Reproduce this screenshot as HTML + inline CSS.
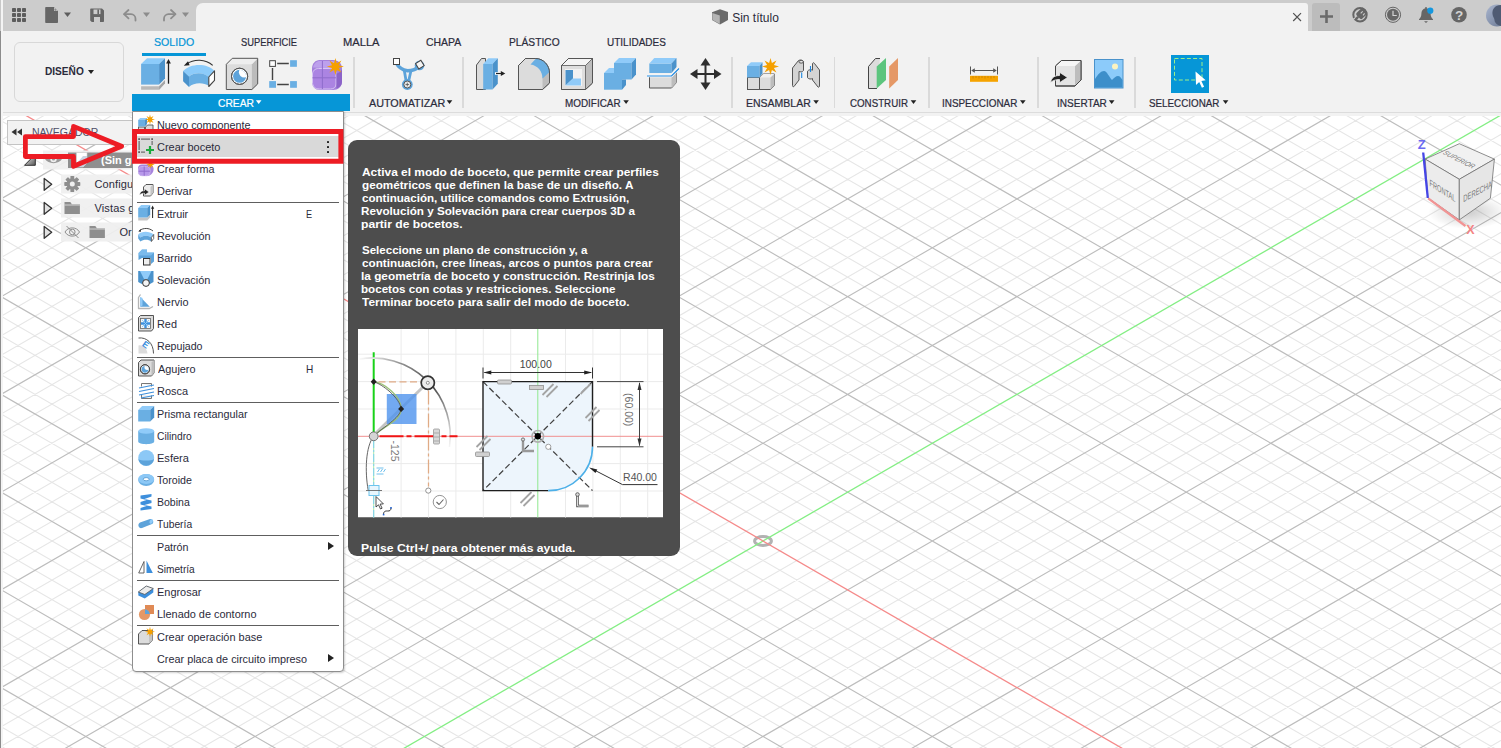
<!DOCTYPE html>
<html lang="es">
<head>
<meta charset="utf-8">
<title>Sin título</title>
<style>
*{box-sizing:border-box;margin:0;padding:0}
html,body{width:1501px;height:748px;overflow:hidden;background:#fff}
body{position:relative;font-family:"Liberation Sans",sans-serif;font-size:11px;color:#2b2b3b}
.abs{position:absolute}
#grid{position:absolute;left:0;top:0}
#leftedge{position:absolute;left:0;top:0;width:3px;height:748px;background:#f4f4f4}
#leftedge i{position:absolute;left:0;width:1px;display:block}
#titlebar{position:absolute;left:3px;top:0;width:1498px;height:31px;background:#cccccc}
#doctab{position:absolute;left:192.500px;top:2.700px;width:1112.500px;height:28.300px;background:#f2f2f2;border-radius:7px 3px 0 0}
#toolbar{position:absolute;left:3px;top:31px;width:1498px;height:82px;background:#f2f2f2}
#tbline{position:absolute;left:3px;top:112px;width:1498px;height:1px;background:#dcdcdc}
#tbband{position:absolute;left:3px;top:113px;width:1498px;height:3px;background:#f2f2f2}
.tab{position:absolute;top:36px;height:12px;line-height:12px;font-size:11px;color:#2b2b3b;white-space:nowrap}
.grp{position:absolute;top:97px;height:12px;line-height:12px;font-size:11px;color:#2b2b3b;white-space:nowrap}
.grp:after{content:"";display:inline-block;margin-left:2px;border-left:3.5px solid transparent;border-right:3.5px solid transparent;border-top:5px solid #222;vertical-align:3px}
.sep{position:absolute;top:57px;width:1.600px;height:51px;background:#dadada;margin-left:-.8px}
svg{display:block;overflow:visible}
.ico{position:absolute}
</style>
</head>
<body>
<svg id="grid" width="1501" height="748" viewBox="0 0 1501 748"><path d="M-10.0 127.2L1511.0 -750.9M-10.0 146.7L1511.0 -731.4M-10.0 166.3L1511.0 -711.9M-10.0 185.8L1511.0 -692.3M-10.0 224.9L1511.0 -653.2M-10.0 244.4L1511.0 -633.7M-10.0 264.0L1511.0 -614.1M-10.0 283.5L1511.0 -594.6M-10.0 322.6L1511.0 -555.5M-10.0 342.2L1511.0 -535.9M-10.0 739.8L1511.0 1617.9M-10.0 361.7L1511.0 -516.4M-10.0 720.3L1511.0 1598.4M-10.0 381.3L1511.0 -496.8M-10.0 700.7L1511.0 1578.8M-10.0 420.4L1511.0 -457.7M-10.0 661.6L1511.0 1539.7M-10.0 439.9L1511.0 -438.2M-10.0 642.1L1511.0 1520.2M-10.0 459.5L1511.0 -418.6M-10.0 622.5L1511.0 1500.6M-10.0 479.0L1511.0 -399.1M-10.0 603.0L1511.0 1481.1M-10.0 518.1L1511.0 -360.0M-10.0 563.9L1511.0 1442.0M-10.0 537.7L1511.0 -340.4M-10.0 544.3L1511.0 1422.4M-10.0 557.2L1511.0 -320.9M-10.0 524.8L1511.0 1402.9M-10.0 576.8L1511.0 -301.3M-10.0 505.2L1511.0 1383.3M-10.0 615.9L1511.0 -262.2M-10.0 466.1L1511.0 1344.2M-10.0 635.4L1511.0 -242.7M-10.0 446.6L1511.0 1324.7M-10.0 655.0L1511.0 -223.2M-10.0 427.0L1511.0 1305.2M-10.0 674.5L1511.0 -203.6M-10.0 407.5L1511.0 1285.6M-10.0 713.6L1511.0 -164.5M-10.0 368.4L1511.0 1246.5M-10.0 733.1L1511.0 -145.0M-10.0 348.9L1511.0 1227.0M-10.0 752.7L1511.0 -125.4M-10.0 329.3L1511.0 1207.4M-10.0 772.2L1511.0 -105.9M-10.0 309.8L1511.0 1187.9M-10.0 811.3L1511.0 -66.8M-10.0 270.7L1511.0 1148.8M-10.0 830.9L1511.0 -47.2M-10.0 251.1L1511.0 1129.2M-10.0 850.4L1511.0 -27.7M-10.0 231.6L1511.0 1109.7M-10.0 870.0L1511.0 -8.1M-10.0 212.0L1511.0 1090.1M-10.0 909.1L1511.0 31.0M-10.0 172.9L1511.0 1051.0M-10.0 928.6L1511.0 50.5M-10.0 153.4L1511.0 1031.5M-10.0 948.2L1511.0 70.1M-10.0 133.8L1511.0 1011.9M-10.0 967.7L1511.0 89.6M-10.0 114.3L1511.0 992.4M-10.0 1006.8L1511.0 128.7M-10.0 75.2L1511.0 953.3M-10.0 1026.4L1511.0 148.3M-10.0 55.6L1511.0 933.7M-10.0 1045.9L1511.0 167.8M-10.0 36.1L1511.0 914.2M-10.0 1065.5L1511.0 187.4M-10.0 16.5L1511.0 894.6M-10.0 1104.6L1511.0 226.5M-10.0 -22.6L1511.0 855.5M-10.0 1124.1L1511.0 246.0M-10.0 -42.1L1511.0 836.0M-10.0 1143.7L1511.0 265.5M-10.0 -61.7L1511.0 816.5M-10.0 1163.2L1511.0 285.1M-10.0 -81.2L1511.0 796.9M-10.0 1202.3L1511.0 324.2M-10.0 -120.3L1511.0 757.8M-10.0 1221.8L1511.0 343.7M-10.0 -139.8L1511.0 738.3M-10.0 1241.4L1511.0 363.3M-10.0 -159.4L1511.0 718.7M-10.0 1260.9L1511.0 382.8M-10.0 -178.9L1511.0 699.2M-10.0 1300.0L1511.0 421.9M-10.0 -218.0L1511.0 660.1M-10.0 1319.6L1511.0 441.5M-10.0 -237.6L1511.0 640.5M-10.0 1339.1L1511.0 461.0M-10.0 -257.1L1511.0 621.0M-10.0 1358.7L1511.0 480.6M-10.0 -276.7L1511.0 601.4M-10.0 1397.8L1511.0 519.7M-10.0 -315.8L1511.0 562.3M-10.0 1417.3L1511.0 539.2M-10.0 -335.3L1511.0 542.8M-10.0 1436.9L1511.0 558.8M-10.0 -354.9L1511.0 523.2M-10.0 1456.4L1511.0 578.3M-10.0 -374.4L1511.0 503.7M-10.0 1495.5L1511.0 617.4M-10.0 -413.5L1511.0 464.6M-10.0 1515.1L1511.0 637.0M-10.0 -433.1L1511.0 445.0M-10.0 1534.6L1511.0 656.5M-10.0 -452.6L1511.0 425.5M-10.0 1554.2L1511.0 676.1M-10.0 -472.2L1511.0 405.9M-10.0 1593.3L1511.0 715.2M-10.0 -511.3L1511.0 366.8M-10.0 1612.8L1511.0 734.7M-10.0 -530.8L1511.0 347.3M-10.0 1632.4L1511.0 754.2M-10.0 -550.4L1511.0 327.8M-10.0 -569.9L1511.0 308.2M-10.0 -609.0L1511.0 269.1M-10.0 -628.5L1511.0 249.6M-10.0 -648.1L1511.0 230.0M-10.0 -667.6L1511.0 210.5M-10.0 -706.7L1511.0 171.4M-10.0 -726.3L1511.0 151.8M-10.0 -745.8L1511.0 132.3M-10.0 -765.4L1511.0 112.7" stroke="#e6e6e6" stroke-width="1.1" fill="none"/><path d="M-10.0 107.6L1511.0 -770.5M-10.0 205.3L1511.0 -672.8M-10.0 303.1L1511.0 -575.0M-10.0 400.8L1511.0 -477.3M-10.0 681.2L1511.0 1559.3M-10.0 498.6L1511.0 -379.5M-10.0 583.4L1511.0 1461.5M-10.0 596.3L1511.0 -281.8M-10.0 485.7L1511.0 1363.8M-10.0 694.0L1511.0 -184.1M-10.0 388.0L1511.0 1266.1M-10.0 791.8L1511.0 -86.3M-10.0 290.2L1511.0 1168.3M-10.0 889.5L1511.0 11.4M-10.0 192.5L1511.0 1070.6M-10.0 1085.0L1511.0 206.9M-10.0 -3.0L1511.0 875.1M-10.0 1182.7L1511.0 304.6M-10.0 -100.7L1511.0 777.4M-10.0 1280.5L1511.0 402.4M-10.0 -198.5L1511.0 679.6M-10.0 1378.2L1511.0 500.1M-10.0 -296.2L1511.0 581.9M-10.0 1476.0L1511.0 597.9M-10.0 -394.0L1511.0 484.1M-10.0 1573.7L1511.0 695.6M-10.0 -491.7L1511.0 386.4M-10.0 -589.4L1511.0 288.7M-10.0 -687.2L1511.0 190.9" stroke="#bdbdbd" stroke-width="1.15" fill="none"/><ellipse cx="763.0" cy="541.0" rx="8.400" ry="4.400" fill="none" stroke="#b2b2b2" stroke-width="3"/><path d="M-10.0 987.3L1511.0 109.2" stroke="#84ee84" stroke-width="1.3" fill="none"/><path d="M-10.0 94.7L1511.0 972.8" stroke="#f58a8a" stroke-width="1.3" fill="none"/></svg>
<div id="leftedge"><i style="top:0;height:31px;background:#c8c8c8"></i><i style="top:31px;height:717px;background:#8c8c8c"></i></div>
<div id="titlebar">
<div id="doctab"></div>
<div class="abs" style="left:1309px;top:3px;width:28px;height:28px;background:#bcbcbc;border-radius:3px 3px 0 0"></div>
</div>
<svg class="abs" style="left:0;top:0" width="1501" height="31" viewBox="0 0 1501 31">
<!-- app grid -->
<g fill="#5c5c5c">
<rect x="12" y="8" width="4" height="4" rx=".8"/><rect x="17" y="8" width="4" height="4" rx=".8"/><rect x="22" y="8" width="4" height="4" rx=".8"/>
<rect x="12" y="13" width="4" height="4" rx=".8"/><rect x="17" y="13" width="4" height="4" rx=".8"/><rect x="22" y="13" width="4" height="4" rx=".8"/>
<rect x="12" y="18" width="4" height="4" rx=".8"/><rect x="17" y="18" width="4" height="4" rx=".8"/><rect x="22" y="18" width="4" height="4" rx=".8"/>
</g>
<!-- file -->
<path d="M46 7h8l4 4v11.2a.8.800 0 0 1-.8.800h-11.200a.8.800 0 0 1-.8-.8v-14.400a.8.800 0 0 1 .8-.8z" fill="#666"/>
<path d="M54 7v4h4z" fill="#ccc"/><path d="M54.600 8.400v2h2z" fill="#666"/>
<path d="M64 12.500h7l-3.500 4.500z" fill="#5c5c5c"/>
<!-- save -->
<path d="M91 8.500h11l2 2v10.700a.8.800 0 0 1-.8.800h-11.400l-1.600-1.600v-11.100a.8.800 0 0 1 .8-.8z" fill="#666"/>
<rect x="93.500" y="9.500" width="7" height="4.600" fill="#ccc"/><rect x="97.400" y="9.500" width="1.600" height="4.600" fill="#666"/>
<rect x="94" y="17" width="6" height="5" fill="#ccc"/>
<!-- undo -->
<g fill="none" stroke="#8c8c8c" stroke-width="1.800" stroke-linecap="round" stroke-linejoin="round">
<path d="M128.500 10l-4.500 4.200l4.500 4.200"/><path d="M124.500 14.200h6.500a4.500 4.500 0 0 1 4.500 4.500v1.800"/>
<path d="M171 10l4.500 4.200l-4.500 4.200"/><path d="M175 14.200h-6.500a4.500 4.500 0 0 0-4.500 4.500v1.800"/>
</g>
<path d="M143 12.500h7l-3.500 4.500z" fill="#8c8c8c"/>
<path d="M182 12.500h7l-3.500 4.500z" fill="#8c8c8c"/>
<!-- doc cube -->
<path d="M712 12.300l8-3l8 2.700v8l-8 4.500l-8-4.500z" fill="#6a6a6a"/>
<path d="M712.300 12.900l7.500 2.500v8.600l-7.500-4.300z" fill="#b4b4b4"/>
<!-- close x -->
<path d="M1293.200 13.200l7.800 7.800M1301 13.200l-7.800 7.800" stroke="#505050" stroke-width="1.200" fill="none"/>
<!-- plus -->
<path d="M1320 16.500h13M1326.500 10v13" stroke="#6a6a6a" stroke-width="2.600" fill="none"/>
<!-- extensions -->
<circle cx="1360" cy="14.800" r="6.700" fill="none" stroke="#666" stroke-width="2"/>
<path d="M1351.800 20.300l3.600-2.600" stroke="#ccc" stroke-width="1.300" fill="none"/>
<clipPath id="plc"><circle cx="1360" cy="14.800" r="7.600"/></clipPath><g clip-path="url(#plc)"><rect x="1356.600" y="8.700" width="12" height="8" rx="1.800" fill="#666" transform="rotate(-45 1362.600 12.700)"/></g>
<path d="M1358.200 16.800l-2.400 2.600" stroke="#666" stroke-width="2.400" fill="none"/>
<path d="M1360.700 13.300l2-2M1363 15.300l1.600-2" stroke="#ccc" stroke-width="1.100" fill="none"/>
<!-- clock -->
<circle cx="1393" cy="14.800" r="7.600" fill="none" stroke="#666" stroke-width="1"/>
<circle cx="1393" cy="14.800" r="6" fill="#666"/>
<path d="M1393 10.700v4.800h3.800" stroke="#d4d4d4" stroke-width="1.200" fill="none"/>
<!-- bell -->
<path d="M1425.300 7h1.400v1.200c2.600.6 3.900 2.800 3.900 5.300c0 3 1 4.500 2.400 5.700v.8h-14v-.8c1.400-1.200 2.400-2.700 2.400-5.700c0-2.500 1.300-4.700 3.900-5.300z" fill="#666"/>
<path d="M1424 21.200h4l-2 1.800z" fill="#666"/>
<circle cx="1430.300" cy="10.700" r="3.100" fill="#1597de"/>
<!-- help -->
<circle cx="1459" cy="14.800" r="7.800" fill="#666"/>
<text x="1459" y="19.800" font-family="Liberation Sans, sans-serif" font-weight="bold" font-size="13.500" text-anchor="middle" fill="#d4d4d4">?</text>
<!-- avatar -->
<defs><linearGradient id="av" x1="0" y1="0" x2="1" y2="1"><stop offset="0" stop-color="#aab6cf"/><stop offset="1" stop-color="#66748f"/></linearGradient></defs>
<circle cx="1497" cy="15.500" r="11" fill="url(#av)"/>
<path d="M1501 5c-6 0-9 4-8.500 9c.3 3 2 4 2 6c0 2 2 5 6.500 6z" fill="#4f5b73"/>
</svg>
<div class="abs" style="left:732.200px;top:11px;font-size:12px;line-height:15px;color:#2b2b3b;white-space:nowrap">Sin título</div>
<div id="toolbar"></div>
<div id="tbline"></div><div id="tbband"></div>
<div class="abs" style="left:14px;top:42px;width:110px;height:60px;border:1px solid #d8d8d8;border-radius:6px;background:#f2f2f2"></div>
<span style="position:absolute;left:44.643px;top:64.5px;height:13px;line-height:13px;font-size:11px;font-weight:bold;color:#2b2b3b;white-space:nowrap;transform-origin:0 50%;transform:scaleX(0.9188);">DISEÑO</span>
<div class="abs" style="left:88px;top:69.500px;border-left:3.500px solid transparent;border-right:3.500px solid transparent;border-top:4px solid #222"></div>
<span style="position:absolute;left:153.521px;top:35.5px;height:13px;line-height:13px;font-size:10.5px;font-weight:normal;color:#0696d7;white-space:nowrap;transform-origin:0 50%;transform:scaleX(1.0131);-webkit-text-stroke:.2px currentColor">SOLIDO</span>
<div class="abs" style="left:141.500px;top:52.700px;width:64px;height:2.900px;background:#0696d7"></div>
<span style="position:absolute;left:240.779px;top:35.5px;height:13px;line-height:13px;font-size:10.5px;font-weight:normal;color:#2b2b3b;white-space:nowrap;transform-origin:0 50%;transform:scaleX(0.8904);-webkit-text-stroke:.2px currentColor">SUPERFICIE</span>
<span style="position:absolute;left:343.209px;top:35.5px;height:13px;line-height:13px;font-size:10.5px;font-weight:normal;color:#2b2b3b;white-space:nowrap;transform-origin:0 50%;transform:scaleX(1.0612);-webkit-text-stroke:.2px currentColor">MALLA</span>
<span style="position:absolute;left:426.477px;top:35.5px;height:13px;line-height:13px;font-size:10.5px;font-weight:normal;color:#2b2b3b;white-space:nowrap;transform-origin:0 50%;transform:scaleX(0.9954);-webkit-text-stroke:.2px currentColor">CHAPA</span>
<span style="position:absolute;left:509.182px;top:35.5px;height:13px;line-height:13px;font-size:10.5px;font-weight:normal;color:#2b2b3b;white-space:nowrap;transform-origin:0 50%;transform:scaleX(0.9741);-webkit-text-stroke:.2px currentColor">PLÁSTICO</span>
<span style="position:absolute;left:607.451px;top:35.5px;height:13px;line-height:13px;font-size:10.5px;font-weight:normal;color:#2b2b3b;white-space:nowrap;transform-origin:0 50%;transform:scaleX(0.9516);-webkit-text-stroke:.2px currentColor">UTILIDADES</span>
<div class="abs" style="left:132px;top:94px;width:218px;height:17px;background:#0696d7"></div>
<span style="position:absolute;left:217.687px;top:96.5px;height:13px;line-height:13px;font-size:10.5px;font-weight:normal;color:#ffffff;white-space:nowrap;transform-origin:0 50%;transform:scaleX(0.9775);-webkit-text-stroke:.2px currentColor">CREAR</span>
<span style="position:absolute;left:369px;top:96.5px;height:13px;line-height:13px;font-size:10.5px;font-weight:normal;color:#2b2b3b;white-space:nowrap;transform-origin:0 50%;transform:scaleX(1.0255);-webkit-text-stroke:.2px currentColor">AUTOMATIZAR</span>
<span style="position:absolute;left:564.807px;top:96.5px;height:13px;line-height:13px;font-size:10.5px;font-weight:normal;color:#2b2b3b;white-space:nowrap;transform-origin:0 50%;transform:scaleX(0.9437);-webkit-text-stroke:.2px currentColor">MODIFICAR</span>
<span style="position:absolute;left:745.66px;top:96.5px;height:13px;line-height:13px;font-size:10.5px;font-weight:normal;color:#2b2b3b;white-space:nowrap;transform-origin:0 50%;transform:scaleX(1.0004);-webkit-text-stroke:.2px currentColor">ENSAMBLAR</span>
<span style="position:absolute;left:849.513px;top:96.5px;height:13px;line-height:13px;font-size:10.5px;font-weight:normal;color:#2b2b3b;white-space:nowrap;transform-origin:0 50%;transform:scaleX(0.9280);-webkit-text-stroke:.2px currentColor">CONSTRUIR</span>
<span style="position:absolute;left:942.11px;top:96.5px;height:13px;line-height:13px;font-size:10.5px;font-weight:normal;color:#2b2b3b;white-space:nowrap;transform-origin:0 50%;transform:scaleX(0.9422);-webkit-text-stroke:.2px currentColor">INSPECCIONAR</span>
<span style="position:absolute;left:1056.6px;top:96.5px;height:13px;line-height:13px;font-size:10.5px;font-weight:normal;color:#2b2b3b;white-space:nowrap;transform-origin:0 50%;transform:scaleX(0.9563);-webkit-text-stroke:.2px currentColor">INSERTAR</span>
<span style="position:absolute;left:1149.06px;top:96.5px;height:13px;line-height:13px;font-size:10.5px;font-weight:normal;color:#2b2b3b;white-space:nowrap;transform-origin:0 50%;transform:scaleX(0.9349);-webkit-text-stroke:.2px currentColor">SELECCIONAR</span>
<svg class="abs" style="left:0;top:0" width="1501" height="116" viewBox="0 0 1501 116">
<g fill="#222"><path d="M446.7 100.300h5.600l-2.800 3.700z"/><path d="M623.3 100.300h5.600l-2.800 3.700z"/><path d="M813.3 100.300h5.600l-2.800 3.700z"/><path d="M910.7 100.300h5.600l-2.800 3.700z"/><path d="M1020 100.300h5.600l-2.800 3.700z"/><path d="M1108.9 100.300h5.600l-2.800 3.700z"/><path d="M1222.8 100.300h5.600l-2.800 3.700z"/></g>
<path d="M255.9 100.300h5.600l-2.800 3.700z" fill="#fff"/>
</svg>
<div class="sep" style="left:354px"></div>
<div class="sep" style="left:463px"></div>
<div class="sep" style="left:732px"></div>
<div class="sep" style="left:834.700px"></div>
<div class="sep" style="left:928.800px"></div>
<div class="sep" style="left:1038px"></div>
<div class="sep" style="left:1135px"></div>
<svg class="abs" style="left:0;top:0" width="1501" height="116" viewBox="0 0 1501 116">
<defs>
<path id="star8" d="M0-8.500L1.400-3.400L6-6L3.400-1.400L8.500 0L3.400 1.400L6 6L1.400 3.400L0 8.500L-1.400 3.400L-6 6L-3.400 1.400L-8.500 0L-3.400-1.400L-6-6L-1.400-3.400Z"/>
</defs>
<!-- 1 extrude -->
<g>
<path d="M141.100 86.200h18l5.900-6v3l-5.900 6.600h-18z" fill="#b9b9b9"/>
<path d="M159.100 86.200l5.900-6v3l-5.900 6.600z" fill="#a6a6a6"/>
<rect x="141.100" y="63.900" width="18" height="20.700" fill="#6aafe3"/>
<path d="M141.100 63.900l5.900-5.700h18l-5.900 5.700z" fill="#8ccbfa"/>
<path d="M159.100 63.900l5.900-5.700v20.400l-5.900 6z" fill="#4a92cb"/>
<path d="M168.500 83.700v-21" stroke="#222" stroke-width="1.300" fill="none"/>
<path d="M166.100 63.400l2.400-4.500l2.400 4.500z" fill="#222"/>
</g>
<!-- 2 revolve -->
<g>
<path d="M183.100 71.100c7-8 24-8.300 31.400-.3l-5.700 6.200c-5-5-15-5-19.800-.5z" fill="#8ccbfa"/>
<path d="M189 76.500c5-4.500 15-4.500 19.800.5v9c-5-3.800-15-3.700-19.800.9z" fill="#6aafe3"/>
<path d="M183.100 71.100l5.900 5.400v10.400l-5.900-5.600z" fill="#4a92cb"/>
<path d="M208.800 77l5.700-6.200v9.600l-5.700 6.100z" fill="#fff" stroke="#444" stroke-width="1.100" stroke-linejoin="round"/>
<path d="M186.500 64c7.500-5.300 19-5.300 26.200 1.400" fill="none" stroke="#333" stroke-width="1.100"/>
<path d="M183.800 65.700l4.200-4.400l1.600 4z" fill="#222"/>
</g>
<!-- 3 hole -->
<g>
<path d="M226.300 64.300l6-6h25.400v25.600l-5.800 5.600h-25.600z" fill="#dcdcdc"/>
<path d="M251.900 64.300l5.800-6v25.600l-5.800 5.600z" fill="#bcbcbc"/>
<path d="M226.300 64.300l6-6h25.400l-5.800 6z" fill="#eeeeee"/>
<path d="M226.300 64.300l6-6h25.400v25.600l-5.800 5.600h-25.600z" fill="none" stroke="#555" stroke-width="1" stroke-linejoin="round"/>
<circle cx="239.600" cy="76.300" r="8.100" fill="#fff" stroke="#555" stroke-width="1"/>
<clipPath id="hc1"><circle cx="239.600" cy="76.300" r="6.500"/></clipPath>
<g clip-path="url(#hc1)"><rect x="230" y="66" width="20" height="20" fill="#5da3da"/><circle cx="244.200" cy="72.200" r="5.300" fill="#fff"/></g>
<circle cx="239.600" cy="76.300" r="8.100" fill="none" stroke="#555" stroke-width="1"/>
</g>
<!-- 4 pattern -->
<g>
<path d="M272.500 68v12M277.200 63.500h11.600M277.200 84.500h11.600" stroke="#444" stroke-width="1.400" fill="none"/>
<rect x="269.700" y="60.700" width="5.700" height="5.700" fill="#fff" stroke="#444" stroke-width="1"/>
<rect x="290.100" y="60.200" width="6.800" height="6.600" fill="#6aafe3"/>
<rect x="269.200" y="81.100" width="6.800" height="6.700" fill="#6aafe3"/>
<rect x="290.100" y="81.100" width="6.800" height="6.700" fill="#6aafe3"/>
</g>
<!-- 5 form -->
<g>
<path d="M319.500 60h13.500c5 0 9 3.500 9 8.500v13c0 5-4 8.500-9 8.500h-13c-5 0-8-3.500-8-8.500v-13c0-5 3.500-8.500 7.500-8.500z" fill="#a581dc"/>
<path d="M313 67.500c1-4 3.500-6.500 7-6.500h12c3 0 5 1 6 3l-2 4.500z" fill="#bda0ec"/>
<path d="M318.500 68.500h12c3.500 0 5.500 2 5.500 5v10.500c0 3-2 5-5.500 5h-11c-4.500 0-7-2.500-7-7v-8c0-3 2.500-5.500 6-5.500z" fill="#ab84e2" stroke="#d6c4f3" stroke-width="1"/>
<path d="M336.500 73.500c2.500-.5 4.500-2 5.500-4v12.500c0 3-2 5.500-5.500 6.500z" fill="#8c64c8"/>
<path d="M322.400 61v28M312.500 77.800h23.500" stroke="#8f6dcc" stroke-width="1" fill="none"/>
<use href="#star8" transform="translate(335.400 66.600)" fill="#f5a000"/>
</g>
<!-- 6 automate -->
<g>
<path d="M396 62.500q3.500 7 11.500 8.300M419.500 66q-4.500 4.800-12 4.800" fill="none" stroke="#5da3da" stroke-width="3.600" stroke-linecap="round"/>
<path d="M404.300 70.500l1.800 10.500M411 70.500l-2.300 10.500" fill="none" stroke="#5da3da" stroke-width="2.800"/>
<circle cx="419.500" cy="65.500" r="4.800" fill="#5da3da"/>
<circle cx="407.300" cy="84.500" r="5.400" fill="#5da3da"/>
<rect x="393.500" y="58.500" width="6" height="6" fill="#fff" stroke="#444" stroke-width="1"/>
<rect x="416.700" y="61.500" width="6.300" height="6.300" fill="#f4f4f4" stroke="#444" stroke-width="1" transform="rotate(-32 419.850 64.650)"/>
<circle cx="407.300" cy="84.500" r="3.500" fill="#e8e8e8" stroke="#555" stroke-width="1"/>
<path d="M405.500 84.500h3.600M407.300 82.700v3.600" stroke="#555" stroke-width=".8"/>
</g>
<!-- 7 press pull -->
<g>
<path d="M476.500 65l5-6.500h4v31h-9z" fill="#dcdcdc" stroke="#555" stroke-width="1" stroke-linejoin="round"/>
<rect x="483.200" y="64" width="9.300" height="25.500" fill="#6aafe3"/>
<path d="M483.200 64l5-5.800h9.600l-5.300 5.800z" fill="#90cbf9"/>
<path d="M492.500 64l5.300-5.800v25.500l-5.300 5.800z" fill="#4a92cb"/>
<path d="M495 73.500h7" stroke="#fff" stroke-width="2.600"/>
<path d="M496 73.500h6" stroke="#222" stroke-width="1.200"/>
<path d="M500.800 71l4.500 2.500l-4.500 2.500z" fill="#222"/>
</g>
<!-- 8 fillet -->
<g>
<path d="M518.500 65.500l7-7h10c8 0 14 7 14 14.500v10l-7 6.500h-24z" fill="#dcdcdc" stroke="#555" stroke-width="1" stroke-linejoin="round"/>
<path d="M542.500 76.500l7-6.500v13l-7 6.500z" fill="#bdbdbd"/>
<path d="M530.500 64.500l5.500-6c8 0 13.500 6.500 13.500 13.500l-7 6.500c0-7-4.500-13-12-14z" fill="#6aafe3"/>
<path d="M518.500 65.500l7-7h10c8 0 14 7 14 14.500v10l-7 6.500h-24z" fill="none" stroke="#555" stroke-width="1" stroke-linejoin="round"/>
</g>
<!-- 9 shell -->
<g>
<path d="M561.500 65.500l7-7h24v24.500l-7 6.500h-24z" fill="#f4f4f4" stroke="#555" stroke-width="1" stroke-linejoin="round"/>
<path d="M585.500 65.500l7-7v24.500l-7 6.500z" fill="#bdbdbd"/>
<rect x="561.500" y="65.500" width="24" height="24" fill="#dedede"/>
<rect x="565" y="69" width="17" height="17" fill="#f2f2f2"/>
<path d="M565.500 70h7.500v8.500l-7.500 7z" fill="#4a92cb"/>
<path d="M573 78.500h8v7h-15.500z" fill="#90cbf9"/>
<path d="M561.500 65.500l7-7h24v24.500l-7 6.500h-24z" fill="none" stroke="#555" stroke-width="1" stroke-linejoin="round"/>
<path d="M561.500 65.500h24v24M585.500 65.500l7-7" fill="none" stroke="#555" stroke-width=".8"/>
</g>
<!-- 10 combine -->
<g>
<rect x="614" y="63" width="17.500" height="16.500" fill="#6aafe3"/>
<path d="M614 63l5-5h17l-4.500 5z" fill="#90cbf9"/>
<path d="M631.500 63l4.500-5v16.500l-4.500 5z" fill="#4a92cb"/>
<path d="M622 79.500h4v5.500l-4 4.700z" fill="#4a92cb"/>
<rect x="604" y="73" width="18" height="16.700" fill="#6aafe3"/>
<path d="M604 73l5-5h5v5z" fill="#90cbf9"/>
</g>
<!-- 11 split body -->
<g>
<path d="M649.500 76.500h22l5-5v11l-5 5.500h-22z" fill="#dcdcdc" stroke="#555" stroke-width="1" stroke-linejoin="round"/>
<path d="M671.500 76.500l5-5v11l-5 5.500z" fill="#bdbdbd"/>
<rect x="649.300" y="63.500" width="22.200" height="9.500" fill="#6aafe3"/>
<path d="M649.300 63.500l5-5.500h22.200l-5 5.500z" fill="#90cbf9"/>
<path d="M671.500 63.500l5-5.500v9l-5 6z" fill="#4a92cb"/>
<path d="M647 76h24.500l7.500-7.500" fill="none" stroke="#fff" stroke-width="2.400"/>
<path d="M647 76h24.500l7.500-7.500" fill="none" stroke="#1e88e0" stroke-width="1.200"/>
</g>
<!-- 12 move -->
<g fill="#2e2e2e">
<path d="M704.500 64h2v20h-2z"/><path d="M695.500 73h20v2h-20z"/>
<path d="M705.500 58l5 7.500h-10z"/><path d="M705.500 90l5-7.500h-10z"/>
<path d="M690 74l7.500-5v10z"/><path d="M721.500 74l-7.500-5v10z"/>
</g>
<!-- 13 new component -->
<g>
<rect x="747.500" y="77.500" width="12" height="12" fill="#dcdcdc" stroke="#555" stroke-width="1"/>
<path d="M759.500 77.500l4-3.500h11v11.500l-4 4h-11z" fill="#dcdcdc" stroke="#555" stroke-width="1" stroke-linejoin="round"/>
<path d="M759.500 77.500l4-3.500h11l-4 3.500z" fill="#f0f0f0"/>
<path d="M770.500 77.500l4-3.500v11.500l-4 4z" fill="#bdbdbd"/>
<rect x="747" y="66" width="12.500" height="11.500" fill="#6aafe3"/>
<path d="M747 66l4-3.800h11.500l-3 3.800z" fill="#90cbf9"/>
<path d="M759.500 66l3-3.800v11l-3 4.300z" fill="#4a92cb"/>
<use href="#star8" transform="translate(770.500 66.500)" fill="#f5a000"/>
</g>
<!-- 14 joint -->
<g stroke="#555" stroke-width="1" stroke-linejoin="round">
<path d="M792.500 68l6-7.500c2-1 4-.5 5 1v9c-1 1.500-3 1.500-4.500 1v8.500l-5 6.500c-1 .5-1.500 0-1.500-1z" fill="#d4d4d4"/>
<ellipse cx="801.200" cy="61.800" rx="2.300" ry="1.300" fill="#f0f0f0"/>
<path d="M812.500 63.500c.5-1 1.500-1 2 0l5 6.500v16c0 1-.8 1.500-1.500 1l-5.500-7v-1.500c-1.500 1-4 .5-5-.8v-6.500c1-1.500 3.500-2 5-1z" fill="#d4d4d4"/>
</g>
<path d="M801.700 72.500v5.500M810.500 66v6" stroke="#1e88e0" stroke-width="1.100" fill="none"/>
<!-- 15 construct -->
<g>
<path d="M877 88.500h-8.500v-22l7-8h4.500" fill="#dcdcdc" stroke="#444" stroke-width="1" stroke-linejoin="round"/>
<path d="M876.700 66.500l9.300-8.500v22l-9.300 8.500z" fill="#5cc57e"/>
<path d="M889.200 66.500l8.800-8.500v22l-8.800 8.500z" fill="#e59866"/>
</g>
<!-- 16 measure -->
<g>
<path d="M970.500 66.500v8M997.500 66.500v8M972 70.500h24" stroke="#555" stroke-width="1" fill="none"/>
<path d="M971.200 70.500l3.600-2.200v4.400zM996.800 70.500l-3.600-2.200v4.400z" fill="#555"/>
<rect x="970" y="75.800" width="28" height="6" fill="#f5a300"/>
<path d="M973 76v2.500M976 76v2M979 76v2.500M982 76v2M985 76v2.500M988 76v2M991 76v2.500M994 76v2" stroke="#c47d00" stroke-width=".7"/>
</g>
<!-- 17 insert derive -->
<g>
<path d="M1055.500 66l6-5.500h19.500v19.500l-6 6h-19.500z" fill="#e4e4e4" stroke="#444" stroke-width="1" stroke-linejoin="round"/>
<path d="M1075 66l6-5.500v19.500l-6 6z" fill="#bdbdbd"/>
<path d="M1055.500 66l6-5.500h19.500l-6 5.500z" fill="#f6f6f6"/>
<path d="M1055.500 66l6-5.500h19.500v19.500l-6 6h-19.500z" fill="none" stroke="#444" stroke-width="1" stroke-linejoin="round"/>
<path d="M1050.500 82.500c1-5 4-7 9-7v-3.200l8 5.200l-8 5.200v-3.200c-4 0-6.500 1-9 3z" fill="#222" stroke="#f2f2f2" stroke-width=".8"/>
</g>
<!-- 18 image -->
<g>
<rect x="1094.500" y="59.500" width="28.500" height="28.500" fill="#8ccbfa" stroke="#4a92cb" stroke-width="1"/>
<path d="M1095 79c3-5 6-8 9-8s5 6 8 9c2-2 4-4 6-4s3 2 4.500 4v7.500h-27.500z" fill="#3d8fca"/>
<circle cx="1115" cy="66.500" r="3" fill="#fbf3c0"/>
</g>
<!-- 19 select -->
<g>
<rect x="1171" y="55" width="38" height="38" fill="#0696d7"/>
<rect x="1174.500" y="58.500" width="27.500" height="21.500" fill="none" stroke="#9df08a" stroke-width="1" stroke-dasharray="4 2.200"/>
<path d="M1195.500 71.500l10.200 8.800l-4.300.8l2.700 5.600l-2.200 1l-2.700-5.600l-3.200 2.900z" fill="#fff"/>
</g>
</svg>
<div class="abs" style="left:7px;top:120px;width:200px;height:25px;background:#f2f2f2;border:1px solid #c4c4c4"></div>
<svg class="abs" style="left:0;top:116px" width="140" height="140" viewBox="0 116 140 140">
<path d="M16.500 128.500v7l-5-3.500zM22 128.500v7l-5-3.500z" fill="#333"/>
<!-- row backgrounds -->
<rect x="43" y="150.500" width="91" height="19" fill="#efefef" opacity=".92"/>
<rect x="61" y="174.500" width="73" height="19" fill="#efefef" opacity=".92"/>
<rect x="61" y="198.500" width="73" height="19" fill="#efefef" opacity=".92"/>
<rect x="61" y="222.500" width="73" height="19" fill="#efefef" opacity=".92"/>
<rect x="68" y="152.500" width="66" height="15.500" fill="#8f8f8f"/>
<!-- expand triangle -->
<defs><linearGradient id="tg" x1="0" y1="0" x2="1" y2="1"><stop offset="0" stop-color="#fff"/><stop offset="1" stop-color="#555"/></linearGradient></defs>
<path d="M24.500 165.300h10.800v-11z" fill="url(#tg)" stroke="#333" stroke-width="1"/>
<!-- eye -->
<path d="M45 159c3-5.500 14-5.500 17 0c-3 5.500-14 5.500-17 0z" fill="#9a9a9a"/>
<circle cx="53.500" cy="159" r="3.200" fill="#efefef"/><circle cx="53.500" cy="159" r="1.600" fill="#9a9a9a"/>
<!-- doc icon -->
<path d="M76.500 152.500h10.500v10l-4 4.500h-6.500z" fill="#fff" stroke="#d0d0d0" stroke-width=".6"/>
<path d="M77 163l6-7h4v7l-4 4h-6z" fill="#c9d2e0"/>
<!-- arrows -->
<g fill="#e2e2e2" stroke="#333" stroke-width="1.300" stroke-linejoin="round">
<path d="M44.200 178.500l7.500 5.800l-7.500 6z"/>
<path d="M44.200 202.500l7.500 5.800l-7.500 6z"/>
<path d="M44.200 226.500l7.500 5.800l-7.500 6z"/>
</g>
<!-- gear -->
<g transform="translate(72.300 184)" fill="#8e8e8e">
<g id="teeth"><rect x="-1.900" y="-8" width="3.800" height="16" rx=".6"/><rect x="-1.900" y="-8" width="3.800" height="16" rx=".6" transform="rotate(45)"/><rect x="-1.900" y="-8" width="3.800" height="16" rx=".6" transform="rotate(90)"/><rect x="-1.900" y="-8" width="3.800" height="16" rx=".6" transform="rotate(135)"/></g>
<circle r="5.800"/><circle r="2.500" fill="#efefef"/>
</g>
<!-- folder 1 -->
<path d="M64.500 202h5.800l1.600 2.200h8v9.800h-15.400z" fill="#8e8e8e"/><path d="M64.500 205h15.400" stroke="#efefef" stroke-width=".7"/>
<!-- eye off -->
<g fill="none" stroke="#8e8e8e" stroke-width="1">
<path d="M65 232c3-5.500 11.500-5.500 14.500 0c-3 5.500-11.500 5.500-14.500 0z"/><circle cx="72.300" cy="232" r="2.800"/>
<path d="M66.500 226l12 12"/>
</g>
<!-- folder 2 -->
<path d="M89.500 226h5.800l1.600 2.200h8v9.800h-15.400z" fill="#8e8e8e"/><path d="M89.500 229h15.400" stroke="#efefef" stroke-width=".7"/>
</svg>
<span style="position:absolute;left:31.9593px;top:125.9px;height:13px;line-height:13px;font-size:11px;font-weight:normal;color:#4d4d66;white-space:nowrap;transform-origin:0 50%;transform:scaleX(0.9553);">NAVEGADOR</span>
<div class="abs" style="left:0;top:140px;width:133.500px;height:110px;overflow:hidden">
<span class="abs" style="left:101px;top:12.300px;font-size:11px;line-height:16px;font-weight:bold;color:#fff;white-space:nowrap">(Sin guardar)</span>
<span class="abs" style="left:94.400px;top:36px;font-size:11px;line-height:16px;color:#2b2b3b;white-space:nowrap;letter-spacing:.15px">Configuración del documento</span>
<span class="abs" style="left:94.400px;top:60px;font-size:11px;line-height:16px;color:#2b2b3b;white-space:nowrap;letter-spacing:.15px">Vistas guardadas</span>
<span class="abs" style="left:119.400px;top:84px;font-size:11px;line-height:16px;color:#2b2b3b;white-space:nowrap;letter-spacing:.15px">Origen</span>
</div>
<div class="abs" style="left:132px;top:111px;width:212px;height:561px;background:#fff;border:1px solid #8e8e8e;border-radius:0 0 4px 4px;box-shadow:1px 1px 2px rgba(0,0,0,.18)"></div>
<div class="abs" style="left:137px;top:136px;width:202px;height:21px;background:#d9d9d9"></div>
<div class="abs" style="left:137px;top:202px;width:202px;height:1px;background:#5e5e5e"></div>
<div class="abs" style="left:137px;top:357px;width:202px;height:1px;background:#5e5e5e"></div>
<div class="abs" style="left:137px;top:402px;width:202px;height:1px;background:#5e5e5e"></div>
<div class="abs" style="left:137px;top:535px;width:202px;height:1px;background:#5e5e5e"></div>
<div class="abs" style="left:137px;top:580px;width:202px;height:1px;background:#5e5e5e"></div>
<div class="abs" style="left:137px;top:625px;width:202px;height:1px;background:#5e5e5e"></div>
<span style="position:absolute;left:156.636px;top:118.8px;height:13px;line-height:13px;font-size:11px;font-weight:normal;color:#2b2b3b;white-space:nowrap;transform-origin:0 50%;transform:scaleX(0.9814);">Nuevo componente</span>
<span style="position:absolute;left:156.952px;top:140.8px;height:13px;line-height:13px;font-size:11px;font-weight:normal;color:#2b2b3b;white-space:nowrap;transform-origin:0 50%;transform:scaleX(0.9970);">Crear boceto</span>
<span style="position:absolute;left:156.96px;top:162.8px;height:13px;line-height:13px;font-size:11px;font-weight:normal;color:#2b2b3b;white-space:nowrap;transform-origin:0 50%;transform:scaleX(0.9813);">Crear forma</span>
<span style="position:absolute;left:156.623px;top:184.8px;height:13px;line-height:13px;font-size:11px;font-weight:normal;color:#2b2b3b;white-space:nowrap;transform-origin:0 50%;transform:scaleX(0.9962);">Derivar</span>
<span style="position:absolute;left:156.636px;top:207.8px;height:13px;line-height:13px;font-size:11px;font-weight:normal;color:#2b2b3b;white-space:nowrap;transform-origin:0 50%;transform:scaleX(0.9823);">Extruir</span>
<span style="position:absolute;left:305.866px;top:207.8px;height:13px;line-height:13px;font-size:11px;font-weight:normal;color:#2b2b3b;white-space:nowrap;transform-origin:0 50%;transform:scaleX(0.8340);">E</span>
<span style="position:absolute;left:156.633px;top:229.8px;height:13px;line-height:13px;font-size:11px;font-weight:normal;color:#2b2b3b;white-space:nowrap;transform-origin:0 50%;transform:scaleX(0.9857);">Revolución</span>
<span style="position:absolute;left:156.627px;top:251.8px;height:13px;line-height:13px;font-size:11px;font-weight:normal;color:#2b2b3b;white-space:nowrap;transform-origin:0 50%;transform:scaleX(0.9925);">Barrido</span>
<span style="position:absolute;left:157.01px;top:273.8px;height:13px;line-height:13px;font-size:11px;font-weight:normal;color:#2b2b3b;white-space:nowrap;transform-origin:0 50%;transform:scaleX(0.9898);">Solevación</span>
<span style="position:absolute;left:156.628px;top:295.8px;height:13px;line-height:13px;font-size:11px;font-weight:normal;color:#2b2b3b;white-space:nowrap;transform-origin:0 50%;transform:scaleX(0.9911);">Nervio</span>
<span style="position:absolute;left:156.632px;top:317.8px;height:13px;line-height:13px;font-size:11px;font-weight:normal;color:#2b2b3b;white-space:nowrap;transform-origin:0 50%;transform:scaleX(0.9869);">Red</span>
<span style="position:absolute;left:156.65px;top:339.8px;height:13px;line-height:13px;font-size:11px;font-weight:normal;color:#2b2b3b;white-space:nowrap;transform-origin:0 50%;transform:scaleX(0.9659);">Repujado</span>
<span style="position:absolute;left:157.5px;top:362.8px;height:13px;line-height:13px;font-size:11px;font-weight:normal;color:#2b2b3b;white-space:nowrap;transform-origin:0 50%;transform:scaleX(0.9905);">Agujero</span>
<span style="position:absolute;left:305.793px;top:362.8px;height:13px;line-height:13px;font-size:11px;font-weight:normal;color:#2b2b3b;white-space:nowrap;transform-origin:0 50%;transform:scaleX(0.9171);">H</span>
<span style="position:absolute;left:156.625px;top:384.8px;height:13px;line-height:13px;font-size:11px;font-weight:normal;color:#2b2b3b;white-space:nowrap;transform-origin:0 50%;transform:scaleX(0.9947);">Rosca</span>
<span style="position:absolute;left:156.637px;top:407.8px;height:13px;line-height:13px;font-size:11px;font-weight:normal;color:#2b2b3b;white-space:nowrap;transform-origin:0 50%;transform:scaleX(0.9803);">Prisma rectangular</span>
<span style="position:absolute;left:156.986px;top:429.8px;height:13px;line-height:13px;font-size:11px;font-weight:normal;color:#2b2b3b;white-space:nowrap;transform-origin:0 50%;transform:scaleX(0.9339);">Cilindro</span>
<span style="position:absolute;left:156.616px;top:451.8px;height:13px;line-height:13px;font-size:11px;font-weight:normal;color:#2b2b3b;white-space:nowrap;transform-origin:0 50%;transform:scaleX(1.0044);">Esfera</span>
<span style="position:absolute;left:157.287px;top:473.8px;height:13px;line-height:13px;font-size:11px;font-weight:normal;color:#2b2b3b;white-space:nowrap;transform-origin:0 50%;transform:scaleX(0.9684);">Toroide</span>
<span style="position:absolute;left:156.658px;top:495.8px;height:13px;line-height:13px;font-size:11px;font-weight:normal;color:#2b2b3b;white-space:nowrap;transform-origin:0 50%;transform:scaleX(0.9569);">Bobina</span>
<span style="position:absolute;left:157.294px;top:517.8px;height:13px;line-height:13px;font-size:11px;font-weight:normal;color:#2b2b3b;white-space:nowrap;transform-origin:0 50%;transform:scaleX(0.9372);">Tubería</span>
<span style="position:absolute;left:156.644px;top:540.8px;height:13px;line-height:13px;font-size:11px;font-weight:normal;color:#2b2b3b;white-space:nowrap;transform-origin:0 50%;transform:scaleX(0.9723);">Patrón</span>
<div class="abs" style="left:328.200px;top:542.2px;border-top:4.800px solid transparent;border-bottom:4.800px solid transparent;border-left:6.200px solid #222"></div>
<span style="position:absolute;left:157.044px;top:562.8px;height:13px;line-height:13px;font-size:11px;font-weight:normal;color:#2b2b3b;white-space:nowrap;transform-origin:0 50%;transform:scaleX(0.9214);">Simetría</span>
<span style="position:absolute;left:156.624px;top:585.8px;height:13px;line-height:13px;font-size:11px;font-weight:normal;color:#2b2b3b;white-space:nowrap;transform-origin:0 50%;transform:scaleX(0.9951);">Engrosar</span>
<span style="position:absolute;left:156.627px;top:607.8px;height:13px;line-height:13px;font-size:11px;font-weight:normal;color:#2b2b3b;white-space:nowrap;transform-origin:0 50%;transform:scaleX(0.9919);">Llenado de contorno</span>
<span style="position:absolute;left:156.952px;top:630.8px;height:13px;line-height:13px;font-size:11px;font-weight:normal;color:#2b2b3b;white-space:nowrap;transform-origin:0 50%;transform:scaleX(0.9955);">Crear operación base</span>
<span style="position:absolute;left:156.958px;top:652.8px;height:13px;line-height:13px;font-size:11px;font-weight:normal;color:#2b2b3b;white-space:nowrap;transform-origin:0 50%;transform:scaleX(0.9858);">Crear placa de circuito impreso</span>
<div class="abs" style="left:328.200px;top:654.2px;border-top:4.800px solid transparent;border-bottom:4.800px solid transparent;border-left:6.200px solid #222"></div>
<div class="abs" style="left:327px;top:140.9px;width:2.200px;height:2.200px;background:#222;border-radius:.6px"></div>
<div class="abs" style="left:327px;top:145.9px;width:2.200px;height:2.200px;background:#222;border-radius:.6px"></div>
<div class="abs" style="left:327px;top:150.9px;width:2.200px;height:2.200px;background:#222;border-radius:.6px"></div>

<svg class="abs" style="left:0;top:112px" width="360" height="562" viewBox="0 112 360 562">
<defs>
<path id="star5" d="M0-5L.8-1.900L3.500-3.500L1.900-.8L5 0L1.900.8L3.500 3.500L.8 1.900L0 5L-.8 1.900L-3.500 3.500L-1.900.8L-5 0L-1.900-.8L-3.500-3.500L-.8-1.900Z"/>
</defs>
<!-- nuevo componente -->
<rect x="138.500" y="127" width="6" height="6" fill="#dcdcdc" stroke="#555" stroke-width=".9"/>
<path d="M145.500 127l2-2h5.500v6.500l-2 1.500h-5.500z" fill="#dcdcdc" stroke="#555" stroke-width=".9"/>
<rect x="138.200" y="120" width="6.800" height="6.500" fill="#6aafe3"/><path d="M138.200 120l2-2h6.800l-2 2z" fill="#90cbf9"/><path d="M145 120l2-2v6l-2 2.500z" fill="#4a92cb"/>
<use href="#star5" transform="translate(150 119.500)" fill="#f5a000"/>
<!-- crear boceto -->
<g fill="#444"><rect x="138.300" y="138.300" width="1.600" height="1.600"/><rect x="151.300" y="138.300" width="1.600" height="1.600"/><rect x="138.300" y="151.300" width="1.600" height="1.600"/></g>
<path d="M141 139.100h9M139.100 141v9M152.100 141v4M141 152.100h4" stroke="#555" stroke-width="1" fill="none"/>
<path d="M146 150h8M150 146v8" stroke="#1aa83c" stroke-width="2.200" fill="none"/>
<!-- crear forma -->
<path d="M142 164.500h6c3 0 4.500 1.500 5.500 3.500c.5 3-1 6.500-5 8h-6c-3 0-4.500-2-4.500-4.500v-3c0-2.500 1.500-4 4-4z" fill="#a884dd"/>
<path d="M142 166.500h4.500c2 0 3.500 1.200 3.500 3v3c0 2-1.500 3.300-3.500 3.300h-4c-2.500 0-4-1.500-4-3.500v-2.500c0-2 1.500-3.300 3.500-3.300z" fill="#b899ea" stroke="#d4c2f2" stroke-width=".7"/>
<path d="M144.200 166.500v9.300M138.500 171.200h11.500" stroke="#8d68c9" stroke-width=".9"/>
<use href="#star5" transform="translate(150.500 164.500) scale(.85)" fill="#f5a000"/>
<!-- derivar -->
<path d="M143.500 187l2.500-2.500h7v8.500l-2.500 3h-7z" fill="#ececec" stroke="#444" stroke-width=".9" stroke-linejoin="round"/>
<path d="M150.500 187l2.500-2.500v8.500l-2.500 3z" fill="#c4c4c4"/>
<path d="M139.500 195c.5-3 2-4.200 5-4.200v-2l4.500 3.200l-4.500 3.200v-2c-2.200 0-3.700.5-5 1.800z" fill="#222" stroke="#fff" stroke-width=".5"/>
<!-- extruir -->
<path d="M138.200 217.500h9l3-3v3l-3 3h-9z" fill="#c6c6c6"/>
<rect x="138.200" y="208" width="9" height="9.500" fill="#6aafe3"/><path d="M138.200 208l3-3h9l-3 3z" fill="#90cbf9"/><path d="M147.200 208l3-3v9.500l-3 3z" fill="#4a92cb"/>
<path d="M152.600 218v-10.500" stroke="#222" stroke-width="1"/><path d="M151 208.800l1.600-3.300l1.600 3.300z" fill="#222"/>
<!-- revolucion -->
<path d="M138.200 234.500c3-3.500 11-4 15.500 0l-2.300 3c-3-2.500-8-2.500-11 0z" fill="#90cbf9"/>
<path d="M138.200 234.500l2.200 3c3-2.500 8-2.500 11 0v4c-3-2.500-8-2.500-11 0l-2.200-3z" fill="#5da3da"/>
<path d="M151.400 237.500l2.300-3v4l-2.300 3z" fill="#fff" stroke="#444" stroke-width=".8"/>
<path d="M139.500 230.500c4-2.800 9.500-2.800 13.500.5" fill="none" stroke="#333" stroke-width=".9"/><path d="M138.300 231.500l2.300-2.300l.4 2.600z" fill="#222"/>
<!-- barrido -->
<path d="M138.500 253l3.500-3.500h5v3h7v9l-3 2.500v-6h-9l-3.500 2z" fill="#5da3da"/>
<path d="M138.500 253l3.500-3.500h5v3h7l-3 3h-12.500z" fill="#90cbf9" opacity=".6"/>
<rect x="143.500" y="258.500" width="6.500" height="6.500" fill="#f0f0f0" stroke="#333" stroke-width="1"/>
<!-- solevacion -->
<path d="M138.200 271h15.300v11l-3.500 2l-3.500-5h-1l-3.700 5l-3.600-2z" fill="#4a92cb"/>
<path d="M140 271h11.500l-4 8h-3.500z" fill="#90cbf9"/>
<circle cx="146" cy="283" r="3.400" fill="#f4f4f4" stroke="#333" stroke-width="1"/>
<!-- nervio -->
<path d="M140.500 294.500l-2 3v11h11l3.500-2" fill="none" stroke="#b4b4b4" stroke-width="1.300" stroke-linejoin="round"/>
<path d="M140.300 297l9.500 9.800h-9.500z" fill="#5da3da"/><path d="M140.300 297l2.200 1v7.500l-2.200 1.300z" fill="#90cbf9"/>
<!-- red -->
<path d="M138.500 317.500l2-2h13v13l-2 2.500h-13z" fill="#dcdcdc" stroke="#444" stroke-width=".9" stroke-linejoin="round"/>
<rect x="140.500" y="318.500" width="10" height="10" fill="#f4f4f4" stroke="#666" stroke-width=".8"/>
<path d="M145.500 319v9M141 323.500h9" stroke="#3d8fdc" stroke-width="2.400"/><path d="M142 320l7 7M149 320l-7 7" stroke="#90cbf9" stroke-width="1"/>
<!-- repujado -->
<path d="M138.500 353.500v-8c4-1 8 2 9 8z" fill="#dcdcdc"/>
<path d="M138.500 338c8-1 15 5 15 15.500" fill="none" stroke="#555" stroke-width="1"/>
<text x="0" y="0" transform="translate(141.500 345.500) rotate(35)" font-family="Liberation Sans, sans-serif" font-weight="bold" font-size="9" fill="#3d8fdc">E</text>
<!-- agujero -->
<path d="M138.500 362.500l2.500-2.500h13v13l-2.500 3h-13z" fill="#dcdcdc" stroke="#444" stroke-width=".9" stroke-linejoin="round"/>
<path d="M151.500 362.500l2.500-2.500v13l-2.500 3z" fill="#bdbdbd"/>
<circle cx="145" cy="369.300" r="4.600" fill="#fff" stroke="#444" stroke-width=".9"/><clipPath id="hc2"><circle cx="145" cy="369.300" r="3.400"/></clipPath><g clip-path="url(#hc2)"><rect x="140" y="364" width="10" height="10" fill="#5da3da"/><circle cx="147.200" cy="367.300" r="2.700" fill="#fff"/></g>
<circle cx="145" cy="369.300" r="4.600" fill="none" stroke="#444" stroke-width=".9"/>
<!-- rosca -->
<path d="M141.500 383.500h10v3M141.500 383.500v3M141.500 395v3.500h10v-3" fill="#f0f0f0" stroke="#777" stroke-width="1"/>
<path d="M139 388l15-3M139 391.500l15-3M139 395l15-3M141 398l13-2.500" stroke="#3d8fdc" stroke-width="1.200" fill="none"/>
<!-- prisma -->
<rect x="138.200" y="410" width="12" height="11.500" fill="#6aafe3"/><path d="M138.200 410l4-4h12l-4 4z" fill="#90cbf9"/><path d="M150.200 410l4-4v11.500l-4 4z" fill="#4a92cb"/>
<!-- cilindro -->
<path d="M138.200 431v10.500c0 3.500 16 3.500 16 0v-10.500z" fill="#6aafe3"/><ellipse cx="146.200" cy="431" rx="8" ry="2.800" fill="#90cbf9"/>
<!-- esfera -->
<circle cx="146.200" cy="458" r="8" fill="#8cc8f6"/><path d="M138.300 459c2 2 13.500 2 15.800 0a8 8 0 0 1-15.800 0z" fill="#5da3da"/>
<!-- toroide -->
<ellipse cx="146.200" cy="480" rx="8" ry="6" fill="#6aafe3"/><ellipse cx="146.200" cy="479" rx="8" ry="5" fill="#8cc8f6"/><ellipse cx="146.200" cy="479.200" rx="3" ry="1.600" fill="#fff" stroke="#4a92cb" stroke-width=".8"/>
<!-- bobina -->
<path d="M140.500 495.500l11-1.500v2.500l-7 2.500l7 1.500v2.500l-7 2l7 1.500v2.500l-11 1.500v-2.500l6-2l-6-1.500v-2.500l6-2l-6-1.500z" fill="#3d8fdc"/>
<!-- tuberia -->
<path d="M140 522.500l10-3.500c3-.5 4.500 3.500 2 5l-10 4c-3.500 1-5-4-2-5.500z" fill="#5da3da"/><ellipse cx="151.200" cy="521.500" rx="1.600" ry="2.400" transform="rotate(20 151.200 521.500)" fill="#90cbf9"/>
<!-- simetria -->
<path d="M144 561.500v11.500h-5.300z" fill="#fff" stroke="#555" stroke-width=".9" stroke-linejoin="round"/>
<path d="M146.500 560.500v12.500h6.300z" fill="#3d8fdc"/>
<!-- engrosar -->
<path d="M138.300 592l8-6l7 2.500v4l-8.500 6l-6.500-3z" fill="#3d8fdc"/>
<path d="M138.300 592l8-6l7 2.500l-8.500 6z" fill="#ececec" stroke="#555" stroke-width=".8" stroke-linejoin="round"/>
<!-- llenado -->
<rect x="145" y="605" width="9" height="9" fill="#e08a55"/><circle cx="144.500" cy="614.500" r="5.600" fill="#e59866"/>
<path d="M145 609.300a5.600 5.600 0 0 1 4.800 4.700h-4.800z" fill="#5da3da"/>
<!-- operacion base -->
<path d="M138.500 634l3.500-3.500h10.500v9.500l-3.500 4h-10.500z" fill="#dcdcdc" stroke="#444" stroke-width=".9" stroke-linejoin="round"/>
<path d="M149 634l3.500-3.500v9.500l-3.500 4z" fill="#c4c4c4"/>
<use href="#star5" transform="translate(150 631.800)" fill="#f5a000"/>
</svg>
<div class="abs" style="left:348px;top:140px;width:332px;height:416px;background:#4d4d4d;border-radius:9px"></div>
<span style="position:absolute;left:361.902px;top:165.8px;height:13px;line-height:13px;font-size:11px;font-weight:bold;color:#ffffff;white-space:nowrap;transform-origin:0 50%;transform:scaleX(1.0839);">Activa el modo de boceto, que permite crear perfiles</span>
<span style="position:absolute;left:361.732px;top:178.8px;height:13px;line-height:13px;font-size:11px;font-weight:bold;color:#ffffff;white-space:nowrap;transform-origin:0 50%;transform:scaleX(1.0639);">geométricos que definen la base de un diseño. A</span>
<span style="position:absolute;left:361.794px;top:191.8px;height:13px;line-height:13px;font-size:11px;font-weight:bold;color:#ffffff;white-space:nowrap;transform-origin:0 50%;transform:scaleX(1.0536);">continuación, utilice comandos como Extrusión,</span>
<span style="position:absolute;left:361.441px;top:204.8px;height:13px;line-height:13px;font-size:11px;font-weight:bold;color:#ffffff;white-space:nowrap;transform-origin:0 50%;transform:scaleX(1.0618);">Revolución y Solevación para crear cuerpos 3D a</span>
<span style="position:absolute;left:361.413px;top:217.8px;height:13px;line-height:13px;font-size:11px;font-weight:bold;color:#ffffff;white-space:nowrap;transform-origin:0 50%;transform:scaleX(1.1006);">partir de bocetos.</span>
<span style="position:absolute;left:361.912px;top:243.8px;height:13px;line-height:13px;font-size:11px;font-weight:bold;color:#ffffff;white-space:nowrap;transform-origin:0 50%;transform:scaleX(1.0485);">Seleccione un plano de construcción y, a</span>
<span style="position:absolute;left:361.79px;top:256.8px;height:13px;line-height:13px;font-size:11px;font-weight:bold;color:#ffffff;white-space:nowrap;transform-origin:0 50%;transform:scaleX(1.0655);">continuación, cree líneas, arcos o puntos para crear</span>
<span style="position:absolute;left:361.431px;top:269.8px;height:13px;line-height:13px;font-size:11px;font-weight:bold;color:#ffffff;white-space:nowrap;transform-origin:0 50%;transform:scaleX(1.0752);">la geometría de boceto y construcción. Restrinja los</span>
<span style="position:absolute;left:361.445px;top:282.8px;height:13px;line-height:13px;font-size:11px;font-weight:bold;color:#ffffff;white-space:nowrap;transform-origin:0 50%;transform:scaleX(1.0563);">bocetos con cotas y restricciones. Seleccione</span>
<span style="position:absolute;left:362.081px;top:295.8px;height:13px;line-height:13px;font-size:11px;font-weight:bold;color:#ffffff;white-space:nowrap;transform-origin:0 50%;transform:scaleX(1.0815);">Terminar boceto para salir del modo de boceto.</span>
<span style="position:absolute;left:361.408px;top:541.8px;height:13px;line-height:13px;font-size:11px;font-weight:bold;color:#ffffff;white-space:nowrap;transform-origin:0 50%;transform:scaleX(1.1083);">Pulse Ctrl+/ para obtener más ayuda.</span>
<svg class="abs" style="left:357.500px;top:329px" width="305" height="188.500" viewBox="357.500 329 305 188.500">
<defs>
<linearGradient id="arcg" gradientUnits="userSpaceOnUse" x1="360" y1="355" x2="452" y2="450"><stop offset="0" stop-color="#888" stop-opacity="0"/><stop offset=".25" stop-color="#777" stop-opacity=".8"/><stop offset=".55" stop-color="#444"/><stop offset=".8" stop-color="#888" stop-opacity=".7"/><stop offset="1" stop-color="#aaa" stop-opacity="0"/></linearGradient>
<clipPath id="imgclip"><rect x="357.500" y="329" width="305" height="188.500"/></clipPath>
</defs>
<g clip-path="url(#imgclip)">
<rect x="357.500" y="329" width="305" height="188.500" fill="#fff"/>
<path d="M400.600 329v189M428 329v189M455.400 329v189M482.800 329v189M510.200 329v189M565 329v189M592.400 329v189M619.800 329v189M647.200 329v189M357 354.200h306M357 381.600h306M357 409h306M357 463.600h306M357 491h306" stroke="#ebebeb" stroke-width="1" fill="none"/>
<!-- right shape -->
<path d="M482.500 381.600h109.500v65.200a43.800 43.800 0 0 1-44.300 43.800h-65.200z" fill="#edf5fc"/>
<path d="M537.300 329v189" stroke="#8fe88f" stroke-width="1"/>
<path d="M373.200 436v82" stroke="#a8e8a8" stroke-width="1"/>
<path d="M357 436.300h306" stroke="#f08f8f" stroke-width="1"/>
<path d="M482.500 381.600l109.500 109M592 381.600l-109.500 109" stroke="#444" stroke-width="1.250" stroke-dasharray="6 3" fill="none"/>
<path d="M547.700 490.600h-65.200v-109h109.500v65.200" fill="none" stroke="#1e1e1e" stroke-width="1.400" stroke-linejoin="miter"/>
<path d="M592 446.800a43.800 43.800 0 0 1-44.300 43.800" fill="none" stroke="#4db0e8" stroke-width="1.600"/>
<circle cx="537.300" cy="436.300" r="5.800" fill="none" stroke="#b0b0b0" stroke-width="1.600"/>
<circle cx="537.300" cy="436.300" r="3.200" fill="#000"/>
<circle cx="547.800" cy="446.800" r="2.600" fill="#fff" stroke="#888" stroke-width=".8"/>
<!-- dim 100 -->
<path d="M482.500 367.500v11M592 367.500v11M484 372.500h106.500" stroke="#333" stroke-width="1" fill="none"/>
<path d="M482.800 372.500l8-2v4zM591.700 372.500l-8-2v4z" fill="#222"/>
<text x="535.200" y="368" font-family="Liberation Sans, sans-serif" font-size="10.500" text-anchor="middle" fill="#444">100.00</text>
<!-- dim 60 -->
<path d="M596.500 381.600h46.500M596.500 446.800h46.500M639 383v62.500" stroke="#444" stroke-width="1" fill="none"/>
<path d="M639 382l2 8h-4zM639 446.500l2-8h-4z" fill="#333"/>
<text transform="translate(624.800 409.700) rotate(90)" font-family="Liberation Sans, sans-serif" font-size="10.500" text-anchor="middle" fill="#707070">(60.00)</text>
<!-- R40 -->
<path d="M657 484.600h-35l-30-15.500" stroke="#333" stroke-width="1" fill="none"/>
<path d="M588.600 467.600l8.200 1.800l-1.800 3.600z" fill="#222"/>
<text x="639.500" y="480.500" font-family="Liberation Sans, sans-serif" font-size="10.500" text-anchor="middle" fill="#555">R40.00</text>
<!-- constraint glyphs right -->
<g fill="#d0d0d0" stroke="#909090" stroke-width=".8">
<rect x="497" y="380" width="14" height="4" rx="1"/>
<rect x="529" y="385.500" width="14" height="4"/>
<rect x="475" y="452" width="14" height="4.500" rx="1"/>
</g>
<g stroke="#a4a4a4" stroke-width="1.800" fill="none">
<path d="M542 395l11-11M546 397l11-11"/><path d="M585 418l11-11M588 421l11-11"/><path d="M476 447l11-11M479 450l11-11"/><path d="M520 503l11-11M523 506l11-11"/><path d="M580 394l10-10"/>
</g>
<g stroke="#555" stroke-width="1.200" fill="#ddd">
<path d="M522.500 441v10h11" fill="none" stroke="#999" stroke-width="2.400"/><circle cx="522.500" cy="439.500" r="1.600" stroke-width=".8"/>
<path d="M577 496v10h11" fill="none" stroke="#555" stroke-width="2.600"/><path d="M577 496v10h11" fill="none" stroke="#ddd" stroke-width="1"/><circle cx="577" cy="494.500" r="1.800" stroke-width=".9"/>
</g>
<!-- left sketch -->
<path d="M359 359a78 78 0 0 1 90 88" fill="none" stroke="url(#arcg)" stroke-width="1.600"/>
<path d="M376 432.500l47-46" stroke="#c4c4c4" stroke-width="3" fill="none"/>
<path d="M378 381.800h44" stroke="#e0ab86" stroke-width="1.300" stroke-dasharray="7 3.500" fill="none"/>
<path d="M428 390.500v96" stroke="#e0ab86" stroke-width="1.300" stroke-dasharray="14 3 3 3" fill="none"/>
<rect x="386.300" y="394" width="29.700" height="30" fill="#4f93ee" opacity=".8"/>
<path d="M373.200 381.800c10 1 27.400 14 27.400 27s-20 18-27.400 27.400" fill="none" stroke="#9cc27a" stroke-width="1.400"/>
<path d="M373.200 381.800c8 2 26.400 16 27.400 27.200c-1 9-18 18-27.400 27.200c-8 10-9 35-5.500 54" fill="none" stroke="#555" stroke-width=".9"/>
<path d="M373.200 352.300v83.500" stroke="#19d219" stroke-width="2" stroke-dasharray="5 1.600 90" fill="none"/>
<path d="M373.200 440v78" stroke="#7fd0f0" stroke-width="1" stroke-dasharray="8 2 2 2" fill="none"/>
<path d="M379 436.300h78" stroke="#f01414" stroke-width="2" stroke-dasharray="24 3 5 3" fill="none"/>
<path d="M373.200 378.600l3 3.200l-3 3.200l-3-3.200zM400.600 405.700l3 3.200l-3 3.200l-3-3.200z" fill="#222"/>
<circle cx="373.200" cy="436.300" r="4.400" fill="#d4d4d4" stroke="#666" stroke-width=".9"/>
<circle cx="427.300" cy="382.800" r="6.600" fill="#ececec" stroke="#333" stroke-width="1.700"/>
<circle cx="427.300" cy="382.800" r="1.500" fill="#fff" stroke="#777" stroke-width=".8"/>
<text transform="translate(390.500 440.500) rotate(90)" font-family="Liberation Sans, sans-serif" font-size="10.500" fill="#777">-125</text>
<g fill="#d8d8d8" stroke="#999" stroke-width=".8"><rect x="433" y="429" width="6" height="15" rx="1"/></g>
<path d="M433.500 433h5M433.500 437h5M433.500 441h5" stroke="#999" stroke-width=".7"/>
<path d="M376 468h7M377 472l2-3M380 472l2-3M383 472l2-3M376 474h7" stroke="#4db0e8" stroke-width=".8" fill="none"/>
<rect x="368.500" y="485.500" width="10" height="10" fill="#e8f6fd" stroke="#6cc4ee" stroke-width="1"/>
<path d="M365.500 490.500h16" stroke="#555" stroke-width=".8"/>
<path d="M375.500 496.500v10.500l2.500-2.200l2 4.200l1.600-.8l-2-4.100l3.300-.2z" fill="#fff" stroke="#222" stroke-width=".8"/>
<path d="M383 514.500c0-4 3-3.500 4.500-3.500s3-.5 3-3" fill="none" stroke="#222" stroke-width=".9"/>
<g fill="#2060d0"><rect x="382.300" y="513.800" width="1.600" height="1.600"/><rect x="389.700" y="507" width="1.600" height="1.600"/></g>
<circle cx="427.800" cy="490.600" r="2.600" fill="#fff" stroke="#777" stroke-width=".8"/>
<circle cx="439.300" cy="502" r="6.600" fill="#fff" stroke="#888" stroke-width=".9"/>
<path d="M436 502l2.500 2.500l4.500-5" fill="none" stroke="#666" stroke-width="1.100"/>
</g>
</svg>
<svg class="abs" style="left:0;top:116px" width="360" height="60" viewBox="0 116 360 60">
<rect x="134.500" y="131.500" width="206.400" height="29.750" fill="none" stroke="#ed1c24" stroke-width="5"/>
<path d="M25.400 136.600h48.100v-10.200l48.100 19.900l-48.100 20v-9.800h-48.100z" fill="none" stroke="#ed1c24" stroke-width="4.800" stroke-linejoin="round"/>
</svg>
<svg class="abs" style="left:1400px;top:120px" width="101" height="130" viewBox="1400 120 101 130">
<defs>
<radialGradient id="vsh" cx=".5" cy=".5" r=".5"><stop offset="0" stop-color="#000" stop-opacity=".2"/><stop offset="1" stop-color="#000" stop-opacity="0"/></radialGradient>
</defs>
<ellipse cx="1468" cy="212" rx="40" ry="17" fill="url(#vsh)"/>
<path d="M1425.200 159.100l34.100-15.400l35.100 15.400l-35.100 20.200z" fill="#f1f1f1" stroke="#606060" stroke-width=".7" stroke-linejoin="round"/>
<path d="M1425.200 159.100l34.100 20.200v40.600l-31.500-22.100z" fill="#ececec" stroke="#606060" stroke-width=".7" stroke-linejoin="round"/>
<path d="M1459.300 179.300l35.100-20.200l-4 39.100l-31.100 21.700z" fill="#e6e6e6" stroke="#606060" stroke-width=".7" stroke-linejoin="round"/>
<path d="M1423.200 152.500l4.600 45.500" stroke="#4545e6" stroke-width="2.300" fill="none"/>
<path d="M1428.200 198.400l37.300 27.600" stroke="#f29494" stroke-width="2.300" fill="none"/>
<text x="1421.700" y="148.800" font-family="Liberation Sans, sans-serif" font-size="13" font-weight="bold" text-anchor="middle" fill="#6a6af2">Z</text>
<text x="1470.300" y="234.300" font-family="Liberation Sans, sans-serif" font-size="12.500" font-weight="bold" text-anchor="middle" fill="#f48484">X</text>
<text transform="matrix(.59 .375 0 1 1429.600 185.800)" font-family="Liberation Sans, sans-serif" font-size="9.500" fill="#7a7a7a">FRONTAL</text>
<text transform="matrix(.617 -.323 0 1 1463.300 202.200)" font-family="Liberation Sans, sans-serif" font-size="9.500" fill="#7a7a7a">DERECHA</text>
<text transform="matrix(.6 .3 -.65 .5 1442.300 153.800)" font-family="Liberation Sans, sans-serif" font-size="9.500" fill="#7a7a7a">SUPERIOR</text>
</svg>
</body>
</html>
